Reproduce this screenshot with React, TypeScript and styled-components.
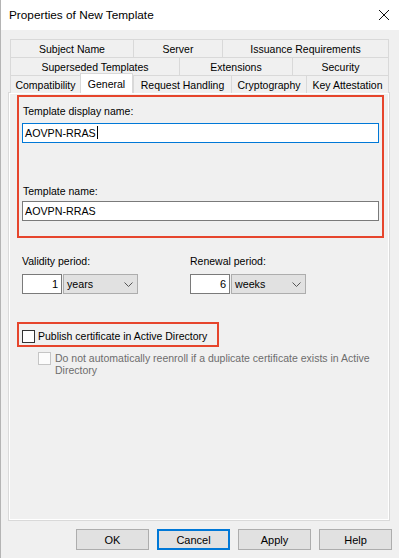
import styled, { createGlobalStyle } from 'styled-components'

const GlobalStyle = createGlobalStyle`
  html, body {
    margin: 0;
    padding: 0;
    background: #f0f0f0;
  }
  body {
    font-family: 'Liberation Sans', Arial, sans-serif;
    font-size: 10.5px;
    color: #000;
  }
`

const RED = '#e6452c'

const Window = styled.div`
  width: 399px;
  height: 558px;
  box-sizing: border-box;
  border-left: 1px solid #b4b4b4;
  background: #f0f0f0;
  display: flex;
  flex-direction: column;
`

const TitleBar = styled.div`
  flex: none;
  height: 30px;
  background: #fff;
  display: flex;
  align-items: center;
  justify-content: space-between;
  padding: 0 10px 0 8px;
  font-size: 11.8px;
`

const Body = styled.div`
  flex: 1;
  padding: 9px 7px 0 7px;
  display: flex;
  flex-direction: column;
`

const Tabs = styled.div`
  margin-left: 2px;
  width: 379px;
  display: flex;
  flex-direction: column;
`

const TabRow = styled.div<{ $h: number }>`
  display: flex;
  align-items: flex-start;
  height: ${(p) => p.$h}px;
`

const Tab = styled.div<{ $w: number; $active?: boolean }>`
  box-sizing: border-box;
  width: ${(p) => p.$w}px;
  height: ${(p) => (p.$active ? 20 : 18)}px;
  margin-top: ${(p) => (p.$active ? -2 : 0)}px;
  position: ${(p) => (p.$active ? 'relative' : 'static')};
  z-index: ${(p) => (p.$active ? 1 : 0)};
  background: ${(p) => (p.$active ? '#fff' : '#f0f0f0')};
  border-top: 1px solid #d9d9d9;
  border-left: 1px solid #d9d9d9;
  border-right: ${(p) => (p.$active ? '1px solid #d9d9d9' : 'none')};
  display: flex;
  align-items: center;
  justify-content: center;
  white-space: nowrap;
  &:last-child {
    border-right: 1px solid #d9d9d9;
  }
`

const Panel = styled.div`
  box-sizing: border-box;
  width: 382px;
  height: 429px;
  border: 1px solid #d9d9d9;
  box-shadow: inset 1px 1px 0 #fff, inset -1px -1px 0 #fff;
  display: flex;
  flex-direction: column;
`

const Highlight = styled.div<{ $w: number; $h: number }>`
  box-sizing: border-box;
  width: ${(p) => p.$w}px;
  height: ${(p) => p.$h}px;
  margin-left: 8px;
  border: 2px solid ${RED};
  display: flex;
  flex-direction: column;
`

const Label = styled.div<{ $top: number }>`
  line-height: 13px;
  margin-top: ${(p) => p.$top}px;
  padding-left: 4px;
`

const Field = styled.div<{ $top: number; $focus?: boolean }>`
  box-sizing: border-box;
  width: 357px;
  height: 20px;
  margin: ${(p) => p.$top}px 0 0 3px;
  background: #fff;
  border: 1px solid ${(p) => (p.$focus ? '#0078d7' : '#7a7a7a')};
  padding-left: 2px;
  line-height: 18px;
  font-size: 10.7px;
`

const Caret = styled.span`
  display: inline-block;
  width: 1px;
  height: 13px;
  background: #000;
  vertical-align: -2px;
  margin-left: 1px;
`

const Periods = styled.div`
  display: flex;
  margin: 17px 0 0 13px;
`

const PeriodGroup = styled.div`
  width: 168px;
  display: flex;
  flex-direction: column;
`

const PeriodLabel = styled.div`
  line-height: 13px;
`

const Controls = styled.div`
  display: flex;
  gap: 1px;
  margin-top: 6px;
`

const Spin = styled.div`
  box-sizing: border-box;
  width: 40px;
  height: 20px;
  background: #fff;
  border: 1px solid #7a7a7a;
  text-align: right;
  padding-right: 3px;
  line-height: 18px;
  font-size: 11px;
`

const Combo = styled.div`
  box-sizing: border-box;
  width: 75px;
  height: 20px;
  background: #e1e1e1;
  border: 1px solid #adadad;
  display: flex;
  align-items: center;
  justify-content: space-between;
  padding: 0 4px 0 3px;
  font-size: 10.7px;
`

const CheckRow = styled.div`
  display: flex;
  align-items: center;
  gap: 3px;
  padding: 3px 0 0 3px;
  height: 100%;
  box-sizing: border-box;
`

const Box = styled.div<{ $disabled?: boolean }>`
  box-sizing: border-box;
  flex: none;
  width: 13px;
  height: 13px;
  background: ${(p) => (p.$disabled ? '#fcfcfc' : '#fff')};
  border: 1px solid ${(p) => (p.$disabled ? '#c5c5c5' : '#333')};
`

const SubOption = styled.div`
  display: flex;
  align-items: flex-start;
  gap: 4px;
  margin: 5px 0 0 29px;
  color: #6d6d6d;
  line-height: 12px;
`

const Buttons = styled.div`
  display: flex;
  justify-content: flex-end;
  gap: 8px;
  margin-top: 8px;
`

const Button = styled.div<{ $default?: boolean }>`
  box-sizing: border-box;
  width: 73px;
  height: 21px;
  background: #e1e1e1;
  border: ${(p) => (p.$default ? '2px solid #0078d7' : '1px solid #adadad')};
  display: flex;
  align-items: center;
  justify-content: center;
  font-size: 11px;
`

const tabRows: { h: number; tabs: { label: string; w: number; active?: boolean }[] }[] = [
  {
    h: 18,
    tabs: [
      { label: 'Subject Name', w: 123 },
      { label: 'Server', w: 89 },
      { label: 'Issuance Requirements', w: 167 },
    ],
  },
  {
    h: 18,
    tabs: [
      { label: 'Superseded Templates', w: 169 },
      { label: 'Extensions', w: 113 },
      { label: 'Security', w: 97 },
    ],
  },
  {
    h: 17,
    tabs: [
      { label: 'Compatibility', w: 70 },
      { label: 'General', w: 53, active: true },
      { label: 'Request Handling', w: 98 },
      { label: 'Cryptography', w: 75 },
      { label: 'Key Attestation', w: 83 },
    ],
  },
]

function Chevron() {
  return (
    <svg width="9" height="5" viewBox="0 0 9 5">
      <path d="M0.5 0.5 L4.5 4.5 L8.5 0.5" fill="none" stroke="#555" strokeWidth="1" />
    </svg>
  )
}

function CloseIcon() {
  return (
    <svg width="10" height="10" viewBox="0 0 10 10">
      <path d="M0 0 L10 10 M10 0 L0 10" stroke="#111" strokeWidth="1" />
    </svg>
  )
}

function Period({ label, value, unit }: { label: string; value: string; unit: string }) {
  return (
    <PeriodGroup>
      <PeriodLabel>{label}</PeriodLabel>
      <Controls>
        <Spin>{value}</Spin>
        <Combo>
          <span>{unit}</span>
          <Chevron />
        </Combo>
      </Controls>
    </PeriodGroup>
  )
}

export default function App() {
  return (
    <>
      <GlobalStyle />
      <Window>
        <TitleBar>
          <span>Properties of New Template</span>
          <CloseIcon />
        </TitleBar>
        <Body>
          <Tabs>
            {tabRows.map((row, i) => (
              <TabRow key={i} $h={row.h}>
                {row.tabs.map((t) => (
                  <Tab key={t.label} $w={t.w} $active={t.active}>
                    {t.label}
                  </Tab>
                ))}
              </TabRow>
            ))}
          </Tabs>
          <Panel>
            <div style={{ height: 2 }} />
            <Highlight $w={367} $h={143}>
              <Label $top={8}>Template display name:</Label>
              <Field $top={5} $focus>
                AOVPN-RRAS
                <Caret />
              </Field>
              <Label $top={42}>Template name:</Label>
              <Field $top={3}>AOVPN-RRAS</Field>
            </Highlight>
            <Periods>
              <Period label="Validity period:" value="1" unit="years" />
              <Period label="Renewal period:" value="6" unit="weeks" />
            </Periods>
            <div style={{ height: 28 }} />
            <Highlight $w={202} $h={25}>
              <CheckRow>
                <Box />
                <span>Publish certificate in Active Directory</span>
              </CheckRow>
            </Highlight>
            <SubOption>
              <Box $disabled />
              <span>
                Do not automatically reenroll if a duplicate certificate exists in Active
                <br />
                Directory
              </span>
            </SubOption>
          </Panel>
          <Buttons>
            <Button>OK</Button>
            <Button $default>Cancel</Button>
            <Button>Apply</Button>
            <Button>Help</Button>
          </Buttons>
        </Body>
      </Window>
    </>
  )
}
